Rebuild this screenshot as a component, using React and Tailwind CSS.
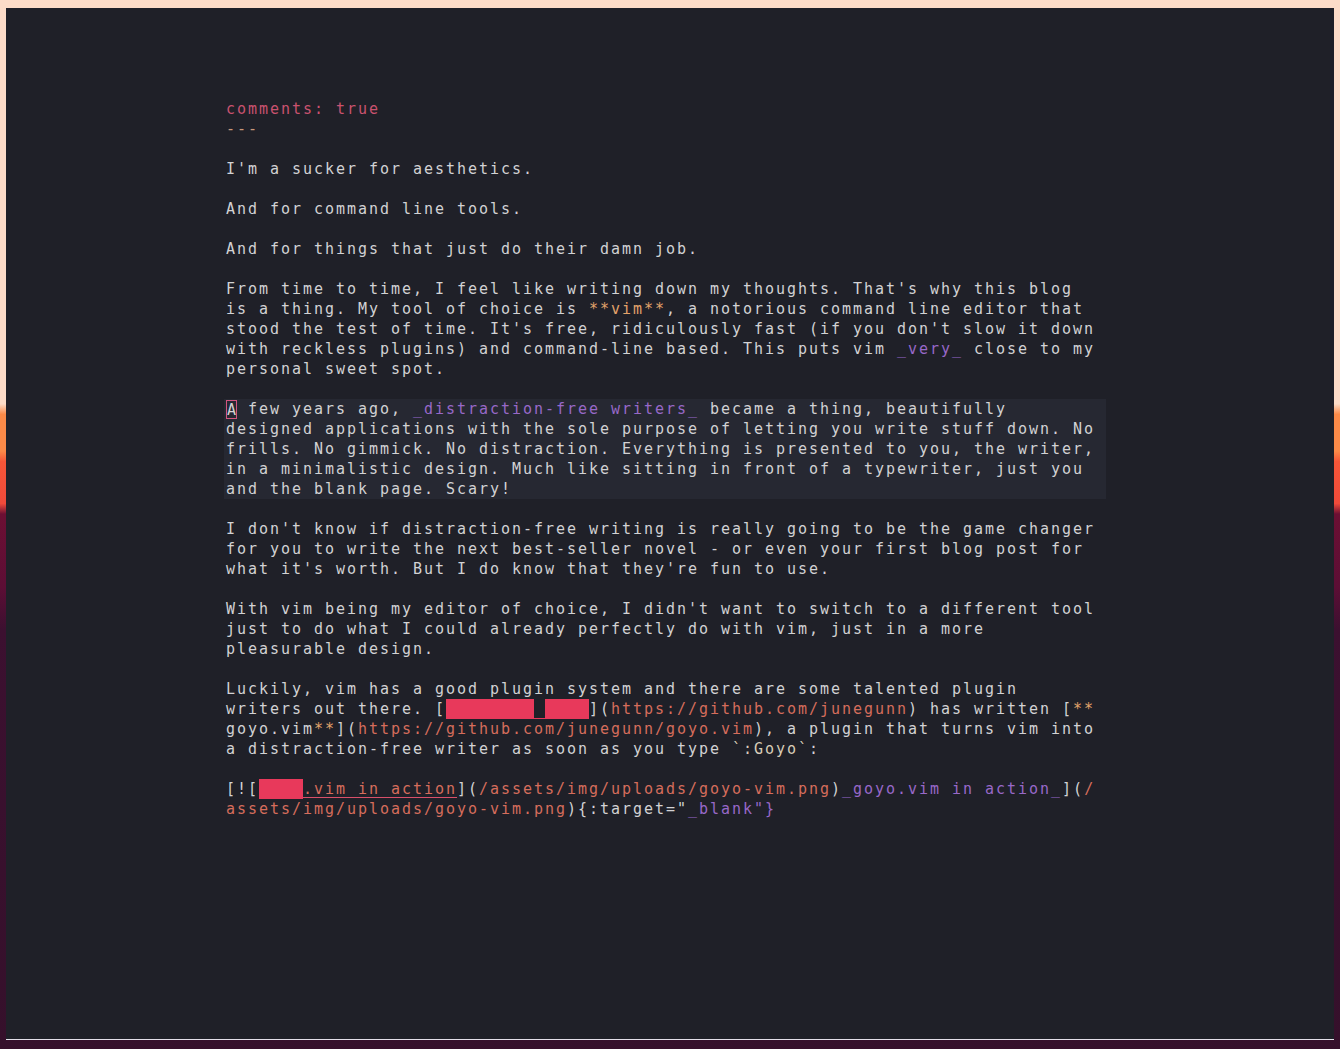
import React from 'react';

// colour shorthands for the markdown highlighting
const T = 'text-[#d2d2d4]';
const PINK = 'text-[#c9526f]';
const TAN = 'text-[#c8987a]';
const BOLD = 'text-[#e2a26a]';
const PURPLE = 'text-[#9868c8]';
const URL = 'text-[#d56d5c]';
const CODE = 'text-[#d8ccb8]';

const t = (s, c = T) => ({ s, c });
const redact = (n) => ({ redact: n });
const gap = () => ({ gap: true });

const before = [
  [t('comments: true', PINK)],
  [t('---', TAN)],
  [],
  [t("I'm a sucker for aesthetics.")],
  [],
  [t('And for command line tools.')],
  [],
  [t('And for things that just do their damn job.')],
  [],
  [t("From time to time, I feel like writing down my thoughts. That's why this blog")],
  [t('is a thing. My tool of choice is '), t('**vim**', BOLD), t(', a notorious command line editor that')],
  [t("stood the test of time. It's free, ridiculously fast (if you don't slow it down")],
  [t('with reckless plugins) and command-line based. This puts vim '), t('_very_', PURPLE), t(' close to my')],
  [t('personal sweet spot.')],
  [],
];

const current = [
  [t('few years ago, '), t('_distraction-free writers_', PURPLE), t(' became a thing, beautifully')],
  [t('designed applications with the sole purpose of letting you write stuff down. No')],
  [t('frills. No gimmick. No distraction. Everything is presented to you, the writer,')],
  [t('in a minimalistic design. Much like sitting in front of a typewriter, just you')],
  [t('and the blank page. Scary!')],
];

const after = [
  [],
  [t("I don't know if distraction-free writing is really going to be the game changer")],
  [t('for you to write the next best-seller novel - or even your first blog post for')],
  [t("what it's worth. But I do know that they're fun to use.")],
  [],
  [t("With vim being my editor of choice, I didn't want to switch to a different tool")],
  [t('just to do what I could already perfectly do with vim, just in a more')],
  [t('pleasurable design.')],
  [],
  [t('Luckily, vim has a good plugin system and there are some talented plugin')],
  [
    t('writers out there. ['),
    redact(8),
    gap(),
    redact(4),
    t(']('),
    t('https://github.com/junegunn', URL),
    t(') has written ['),
    t('**', BOLD),
  ],
  [t('goyo.vim'), t('**', BOLD), t(']('), t('https://github.com/junegunn/goyo.vim', URL), t('), a plugin that turns vim into')],
  [t('a distraction-free writer as soon as you type '), t('`:Goyo`', CODE), t(':')],
  [],
  [
    t('[!['),
    redact(4),
    t('.vim in action', URL + ' underline decoration-[#d9506a] underline-offset-[3px]'),
    t(']('),
    t('/assets/img/uploads/goyo-vim.png', URL),
    t(')'),
    t('_goyo.vim in action_', PURPLE),
    t(']('),
    t('/', URL),
  ],
  [t('assets/img/uploads/goyo-vim.png', URL), t('){:target="'), t('_blank"}', PURPLE)],
];

function Line({ parts, children }) {
  return (
    <div className="h-[20px] leading-[20px] whitespace-pre">
      {children}
      {parts.map((p, i) => {
        if (p.redact) {
          return (
            <span key={i} className="inline-block h-[20px] align-top bg-[#e8395b]" style={{ width: p.redact * 11 }} />
          );
        }
        if (p.gap) {
          return <span key={i} className="inline-block h-[20px] w-[11px] align-top border-b border-[#e8395b]" />;
        }
        return (
          <span key={i} className={p.c}>
            {p.s}
          </span>
        );
      })}
    </div>
  );
}

export default function App() {
  return (
    <div className="w-[1340px] h-[1049px] overflow-hidden pl-[6px] pt-[8px] bg-[linear-gradient(to_bottom,#fcdcc8_0%,#fcdcc8_38.5%,#fb8a48_39.5%,#fb8a48_43%,#f65638_44%,#f04a3a_48%,#6c0f33_49%,#5c0e35_56%,#3c1030_60%,#35102b_100%)]">
      <div className="w-[1328px] h-[1032px] bg-[#1f2028] border-b border-[#e4e0ea] pt-[91px] pl-[220px] font-['DejaVu_Sans_Mono',monospace] text-[15px] tracking-[1.97px]">
        {before.map((l, i) => (
          <Line key={i} parts={l} />
        ))}
        <div className="-ml-[2px] pl-[2px] w-[882px] bg-[#262832]">
          {current.map((l, i) => (
            <Line key={i} parts={l}>
              {i === 0 && (
                <span className="inline-block h-[19px] leading-[18px] w-[11px] align-top border border-[#d35580] text-[#d2d2d4] text-center tracking-normal mt-[1px]">
                  A
                </span>
              )}
              {i === 0 && <span className={T}> </span>}
            </Line>
          ))}
        </div>
        {after.map((l, i) => (
          <Line key={i} parts={l} />
        ))}
      </div>
    </div>
  );
}
